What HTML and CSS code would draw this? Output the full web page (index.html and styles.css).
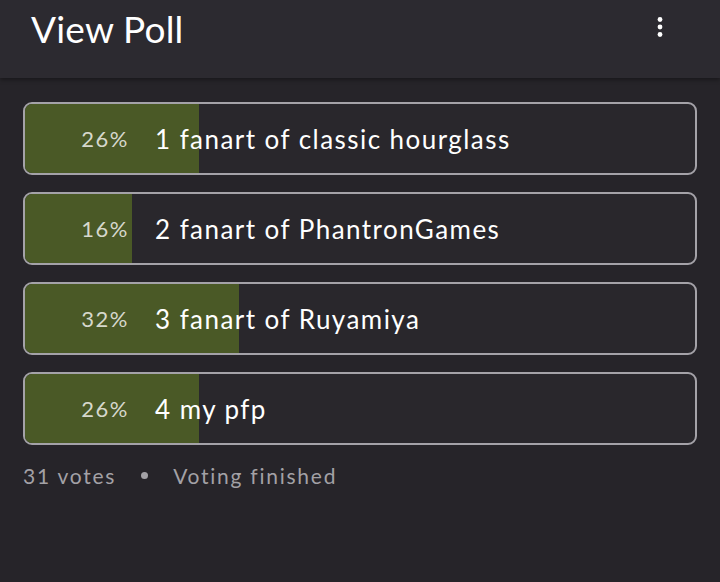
FILE: index.html
```html
<!DOCTYPE html>
<html>
<head>
<meta charset="utf-8">
<link rel="stylesheet" href="styles.css">
</head>
<body>
<header class="appbar">
  <h1 class="title">View Poll</h1>
  <button class="menu" aria-label="More">
    <svg width="6" height="20" viewBox="0 0 6 20"><circle cx="3" cy="2.5" r="2.4" fill="#fff"/><circle cx="3" cy="10" r="2.4" fill="#fff"/><circle cx="3" cy="17.5" r="2.4" fill="#fff"/></svg>
  </button>
</header>
<main class="poll">
  <div class="option"><div class="fill" style="width:26%"></div><span class="pct">26%</span><span class="label">1 fanart of classic hourglass</span></div>
  <div class="option"><div class="fill" style="width:16%"></div><span class="pct">16%</span><span class="label">2 fanart of PhantronGames</span></div>
  <div class="option"><div class="fill" style="width:32%"></div><span class="pct">32%</span><span class="label">3 fanart of Ruyamiya</span></div>
  <div class="option"><div class="fill" style="width:26%"></div><span class="pct">26%</span><span class="label">4 my pfp</span></div>
  <div class="meta"><span>31 votes</span><span class="dot"></span><span>Voting finished</span></div>
</main>
</body>
</html>
```
FILE: styles.css
```css
html, body {
  margin: 0;
  padding: 0;
  background: #262429;
  font-family: Lato, "Noto Sans", sans-serif;
  width: 720px;
  height: 582px;
  overflow: hidden;
}
.appbar {
  height: 78px;
  background: #2c2a30;
  display: flex;
  align-items: flex-start;
  justify-content: space-between;
  padding: 0 57px 0 31px;
  box-shadow: 0 2px 4px rgba(0,0,0,0.35);
  position: relative;
}
.title {
  margin: 7px 0 0;
  font-size: 37px;
  font-weight: 400;
  color: #ffffff;
  line-height: 44px;
  letter-spacing: 0.2px;
}
.menu {
  margin-top: 17px;
  background: none;
  border: 0;
  padding: 0;
  line-height: 0;
}
.poll {
  padding: 24px 23px 0 23px;
  display: flex;
  flex-direction: column;
  gap: 17px;
}
.option {
  position: relative;
  height: 73px;
  box-sizing: border-box;
  border: 2px solid #a4a2a8;
  border-radius: 9px;
  overflow: hidden;
  display: flex;
  align-items: center;
  background: #29272c;
}
.fill {
  position: absolute;
  left: 0;
  top: 0;
  bottom: 0;
  background: #4a5926;
}
.pct {
  position: relative;
  width: 104px;
  text-align: right;
  font-size: 22px;
  color: #d6d8cc;
  letter-spacing: 1.5px;
}
.label {
  position: relative;
  margin-left: 26px;
  font-size: 26px;
  color: #ffffff;
  letter-spacing: 1.45px;
}
.meta {
  display: flex;
  align-items: center;
  margin-top: 1px;
  font-size: 21px;
  color: #a3a1a6;
  letter-spacing: 1.75px;
}
.dot {
  width: 7px;
  height: 7px;
  border-radius: 50%;
  background: #a3a1a6;
  margin: 0 25px 0 25px;
}
```
